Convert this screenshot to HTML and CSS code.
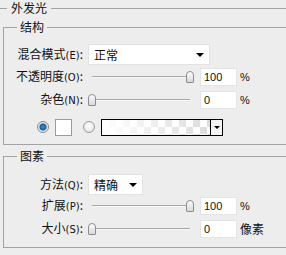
FILE: index.html
```html
<!DOCTYPE html>
<html lang="zh-CN">
<head>
  <meta charset="UTF-8">
  <title>外发光</title>
  <link rel="stylesheet" href="styles.css">
</head>
<body>
  <div class="panel">
    <div class="head"><span class="rule stub"></span><span class="head-text">外发光</span><span class="rule"></span></div>

    <fieldset class="group g1">
      <legend>结构</legend>
      <div class="row r1">
        <span class="lbl">混合模式<span class="key">(E)</span>:</span>
        <div class="select wide"><span class="val">正常</span><i class="caret"></i></div>
      </div>
      <div class="row r2">
        <span class="lbl">不透明度<span class="key">(O)</span>:</span>
        <div class="slider"><div class="track"></div><div class="thumb" style="left: 98px"></div></div>
        <div class="num">100</div><span class="unit">%</span>
      </div>
      <div class="row r3">
        <span class="lbl">杂色<span class="key">(N)</span>:</span>
        <div class="slider"><div class="track"></div><div class="thumb" style="left: 0px"></div></div>
        <div class="num">0</div><span class="unit">%</span>
      </div>
      <div class="row r4">
        <span class="radio on"></span>
        <span class="swatch"></span>
        <span class="radio"></span>
        <div class="gradient"><div class="grad-fill"></div><div class="grad-btn"><i class="caret"></i></div></div>
      </div>
    </fieldset>

    <fieldset class="group g2">
      <legend>图素</legend>
      <div class="row r5">
        <span class="lbl">方法<span class="key">(Q)</span>:</span>
        <div class="select narrow"><span class="val">精确</span><i class="caret"></i></div>
      </div>
      <div class="row r6">
        <span class="lbl">扩展<span class="key">(P)</span>:</span>
        <div class="slider"><div class="track"></div><div class="thumb" style="left: 98px"></div></div>
        <div class="num">100</div><span class="unit">%</span>
      </div>
      <div class="row r7">
        <span class="lbl">大小<span class="key">(S)</span>:</span>
        <div class="slider"><div class="track"></div><div class="thumb" style="left: 0px"></div></div>
        <div class="num">0</div><span class="unit cjk">像素</span>
      </div>
    </fieldset>
  </div>
</body>
</html>
```

FILE: styles.css
```css
html, body {
  margin: 0;
  padding: 0;
}
body {
  background: #ededed;
  overflow: hidden;
  font-family: "Noto Sans CJK SC", "DejaVu Sans", sans-serif;
  font-size: 12px;
  color: #111;
}
.panel {
  width: 286px;
  height: 255px;
  overflow: hidden;
}

/* top title with rules either side */
.head {
  display: flex;
  align-items: center;
  height: 16px;
}
.rule {
  flex: 1;
  height: 0;
  border-top: 1px solid #a2a2a2;
}
.rule.stub {
  flex: 0 0 7px;
}
.head-text {
  padding: 0 4px;
  line-height: 16px;
}

/* group boxes (right edge falls outside the crop) */
.group {
  margin: 4px 0 0 3px;
  padding: 0;
  width: 320px;
  border: 1px solid #a2a2a2;
  min-width: 0;
}
.group legend {
  margin-left: 13px;
  padding: 0 3px;
  line-height: 14px;
  height: 14px;
}
.g1 {
  padding-top: 10px;
  padding-bottom: 1px;
}
.g2 {
  padding-top: 11px;
  padding-bottom: 7px;
}

.row {
  display: flex;
  align-items: center;
}
.r1 { height: 21px; }
.r2, .r3 { height: 23px; }
.r4 { height: 32px; padding-left: 33px; }
.r5 { height: 21px; }
.r6 { height: 22px; }
.r7 { height: 23px; }

.lbl {
  width: 79px;
  margin-right: 5px;
  text-align: right;
  white-space: nowrap;
  line-height: 14px;
}
.key {
  font-family: "DejaVu Sans", sans-serif;
  font-size: 10px;
}

/* dropdowns */
.select {
  height: 21px;
  background: #fff;
  border: 1px solid #e2e2e2;
  box-sizing: border-box;
  display: flex;
  align-items: center;
  padding-left: 5px;
}
.select.wide { width: 122px; }
.select.narrow { width: 55px; }
.val {
  flex: 1;
  line-height: 14px;
}
.caret {
  display: block;
  width: 0;
  height: 0;
  border-left: 4px solid transparent;
  border-right: 4px solid transparent;
  border-top: 4px solid #000;
  margin-right: 5px;
}

/* sliders */
.slider {
  position: relative;
  width: 108px;
  height: 14px;
}
.track {
  margin: 6px 6px 0 4px;
  border-top: 1px solid #a8a8a8;
  border-bottom: 1px solid #f8f8f8;
}
.thumb {
  position: absolute;
  top: 1px;
  width: 6px;
  height: 10px;
  border: 1px solid #8c8c8c;
  border-radius: 4px 4px 1px 1px;
  background: linear-gradient(#fdfdfd, #d8d8d8);
}

.num {
  margin-left: 4px;
  width: 37px;
  height: 18px;
  box-sizing: border-box;
  background: #fff;
  border: 1px solid #e4e4e4;
  padding-left: 3px;
  font-family: "Liberation Sans", sans-serif;
  font-size: 11px;
  line-height: 16px;
}
.unit {
  margin-left: 3px;
  font-family: "Liberation Sans", sans-serif;
  font-size: 11px;
}
.unit.cjk {
  font-family: "Noto Sans CJK SC", sans-serif;
  font-size: 12px;
}

/* colour / gradient choice */
.radio {
  width: 10px;
  height: 10px;
  border-radius: 50%;
  border: 1px solid #9c9c9c;
  background: radial-gradient(circle at 50% 40%, #ffffff, #dcdcdc);
}
.radio.on {
  background: radial-gradient(circle, #3a8fd6 0, #1c5f9c 3px, #cfd9e3 4px, #f2f2f2 5px);
  border-color: #8a8a8a;
}
.swatch {
  margin-left: 6px;
  width: 15px;
  height: 15px;
  background: #fff;
  border: 1px solid #9a9a9a;
  margin-right: 11px;
}
.gradient {
  margin-left: 6px;
  display: flex;
  width: 122px;
  height: 17px;
  box-sizing: border-box;
  border: 1px solid #000;
}
.grad-fill {
  flex: 1;
  background:
    linear-gradient(to right, #fff, rgba(255,255,255,0)),
    repeating-conic-gradient(#dcdcdc 0 25%, #fff 0 50%) 0 0 / 14px 14px;
}
.grad-btn {
  width: 11px;
  border-left: 1px solid #000;
  background: #f4f4f4;
  display: flex;
  align-items: center;
  justify-content: center;
}
.grad-btn .caret {
  margin: 0;
  border-left-width: 3px;
  border-right-width: 3px;
  border-top-width: 3px;
}
```
